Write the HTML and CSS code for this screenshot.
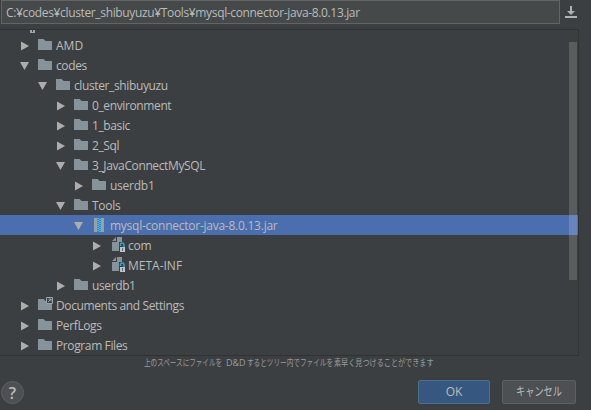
FILE: index.html
```html
<!DOCTYPE html>
<html lang="ja">
<head>
<meta charset="utf-8">
<title>Select Path</title>
<link rel="stylesheet" href="styles.css">
</head>
<body>
<svg class="defs" width="0" height="0">
  <symbol id="closed" viewBox="0 0 10 10"><path d="M1 .5 9 5 1 9.5Z" fill="#adadad"/></symbol>
  <symbol id="open" viewBox="0 0 10 10"><path d="M0 1H9L4.5 9Z" fill="#adadad"/></symbol>
  <symbol id="folder" viewBox="0 0 14 11"><path d="M0 0H5.6L7.6 2H14V11H0Z" fill="#87939a"/></symbol>
  <symbol id="link" viewBox="0 0 16 14"><path d="M0 3H5.6L7.6 5H14V14H0Z" fill="#87939a"/><path d="M8.5 1.5H14.5V7.5H8.5Z" fill="#3c3f41" stroke="#9da7ad"/><path d="M10 6 13 3M10.5 3H13V5.5" fill="none" stroke="#9da7ad"/></symbol>
  <symbol id="jar" viewBox="0 0 10 14"><path d="M0 0H3V14H0ZM7 0H10V14H7Z" fill="#93a1aa"/><path d="M3 0H7V14H3Z" fill="#4682b4"/><path d="M4 0V14M6 1V14" stroke="#40b6e0" stroke-width="2" stroke-dasharray="1 1"/></symbol>
  <symbol id="locked" viewBox="0 0 14 16"><path d="M4 0V4H0ZM5 0H10V5H7V14H0V5H5Z" fill="#87939a"/><path d="M8.5 9V7.5Q8.5 6 10.2 6T12 7.5V10" fill="none" stroke="#35a9d6" stroke-width="1.4"/><path d="M8 10H13V15H8Z" fill="#b7c5ce"/><path d="M10 11H11V14H10Z" fill="#586b76"/></symbol>
</svg>
<main class="dialog">
  <div class="top">
    <div class="path"><span>C:¥codes¥cluster_shibuyuzu¥Tools¥mysql-connector-java-8.0.13.jar</span></div>
    <svg class="download" width="12" height="12" viewBox="0 0 12 12"><path d="M5 0H7V5H10L6 9 2 5H5ZM0 10H12V12H0Z" fill="#afb1b3"/></svg>
  </div>
  <div class="tree">
    <div class="rows">
      <div class="row above"><i class="handle"></i></div>
      <div class="row l0"><svg class="arrow"><use href="#closed"/></svg><svg class="folder"><use href="#folder"/></svg><span class="caps">AMD</span></div>
      <div class="row l0"><svg class="arrow"><use href="#open"/></svg><svg class="folder"><use href="#folder"/></svg><span>codes</span></div>
      <div class="row l1"><svg class="arrow"><use href="#open"/></svg><svg class="folder"><use href="#folder"/></svg><span>cluster_shibuyuzu</span></div>
      <div class="row l2"><svg class="arrow"><use href="#closed"/></svg><svg class="folder"><use href="#folder"/></svg><span>0_environment</span></div>
      <div class="row l2"><svg class="arrow"><use href="#closed"/></svg><svg class="folder"><use href="#folder"/></svg><span>1_basic</span></div>
      <div class="row l2"><svg class="arrow"><use href="#closed"/></svg><svg class="folder"><use href="#folder"/></svg><span>2_Sql</span></div>
      <div class="row l2"><svg class="arrow"><use href="#open"/></svg><svg class="folder"><use href="#folder"/></svg><span>3_JavaConnectMySQL</span></div>
      <div class="row l3"><svg class="arrow"><use href="#closed"/></svg><svg class="folder"><use href="#folder"/></svg><span class="wide">userdb1</span></div>
      <div class="row l2"><svg class="arrow"><use href="#open"/></svg><svg class="folder"><use href="#folder"/></svg><span class="wide">Tools</span></div>
      <div class="row l3 selected"><svg class="arrow"><use href="#open"/></svg><svg class="jar"><use href="#jar"/></svg><span class="wide">mysql-connector-java-8.0.13.jar</span></div>
      <div class="row l4"><svg class="arrow"><use href="#closed"/></svg><svg class="locked"><use href="#locked"/></svg><span class="wide">com</span></div>
      <div class="row l4"><svg class="arrow"><use href="#closed"/></svg><svg class="locked"><use href="#locked"/></svg><span class="caps">META-INF</span></div>
      <div class="row l2"><svg class="arrow"><use href="#closed"/></svg><svg class="folder"><use href="#folder"/></svg><span>userdb1</span></div>
      <div class="row l0"><svg class="arrow"><use href="#closed"/></svg><svg class="link"><use href="#link"/></svg><span>Documents and Settings</span></div>
      <div class="row l0"><svg class="arrow"><use href="#closed"/></svg><svg class="folder"><use href="#folder"/></svg><span>PerfLogs</span></div>
      <div class="row l0"><svg class="arrow"><use href="#closed"/></svg><svg class="folder"><use href="#folder"/></svg><span>Program Files</span></div>
    </div>
    <div class="thumb"></div>
  </div>
  <p class="hint"><span class="part a">上のスペースにファイルを</span><span class="part b">D&amp;D</span><span class="part c">するとツリー内でファイルを</span><span class="part d">素早く見つけることができます</span></p>
  <footer class="actions">
    <button class="help">?</button>
    <button class="btn primary">OK</button>
    <button class="btn"><span class="kana">キャンセル</span></button>
  </footer>
</main>
</body>
</html>
```
FILE: styles.css
```css
* { box-sizing: border-box; }
body {
  margin: 0;
  background: #3c3f41;
  color: #bbbbbb;
  font: 12px/20px "Open Sans", "Noto Sans CJK JP", sans-serif;
}
.defs { position: absolute; }
.dialog { width: 591px; height: 410px; overflow: hidden; display: flex; flex-direction: column; }
.top { display: flex; height: 29px; align-items: flex-start; }
.path {
  width: 559px; height: 24px; margin-left: 1px; padding: 2px 0 0 4px;
  background: #45494a; border: 1px solid #646464; white-space: nowrap; letter-spacing: -0.35px;
}
.download { margin: 6px 0 0 5px; }
.tree {
  width: 579px; height: 327px; flex: none; position: relative; overflow: hidden;
  border: 1px solid #323232; border-left: 0;
}
.rows { margin-top: -15px; }
.row { height: 20px; display: flex; align-items: center; white-space: nowrap; letter-spacing: -0.38px; }
.row span { padding-top: 2px; }
.row .caps { letter-spacing: 0; }
.row .wide { letter-spacing: -0.25px; }
.l0 { padding-left: 20px; }
.l1 { padding-left: 38px; }
.l2 { padding-left: 56px; }
.l3 { padding-left: 74px; }
.l4 { padding-left: 92px; }
.selected { background: #4b6eaf; }
.arrow { width: 10px; height: 10px; margin: 1px 8px 0 0; }
.folder { width: 14px; height: 11px; margin: 0 4px 1px 0; }
.link { width: 16px; height: 14px; margin: -4px 2px 0 0; }
.jar { width: 10px; height: 14px; margin: 0 6px 0 2px; }
.locked { width: 14px; height: 16px; margin: 0 2px; }
.above { padding-left: 30px; align-items: flex-end; }
.handle { width: 5px; height: 3px; margin-bottom: 2px; border: solid #9aa7b0; border-width: 0 2px 1px; }
.thumb { position: absolute; top: 12px; right: 1px; width: 8px; height: 238px; background: rgba(255, 255, 255, 0.155); }
.hint {
  margin: 0; padding-left: 144px; height: 22px; line-height: 14px; display: flex;
  font-size: 9px; color: #9b9b9b; white-space: nowrap;
}
.part { flex: none; transform-origin: 0 50%; }
.a { width: 82px; transform: scaleX(0.73); }
.b { width: 21px; }
.c { width: 87px; transform: scaleX(0.735); }
.d { width: 101px; transform: scaleX(0.79); }
.actions { display: flex; height: 32px; align-items: flex-start; padding-top: 2px; }
button { font: inherit; color: #bbbbbb; padding: 0; }
.help {
  width: 23px; height: 23px; margin: 1px 394px 0 1px; border-radius: 50%;
  border: 1px solid #5e6060; background: #4c5052; font-size: 16px; font-weight: 600; line-height: 20px;
}
.btn {
  width: 74px; height: 24px; margin-right: 12px; border-radius: 2px;
  border: 1px solid #5e6060; background: #4c5052; line-height: 22px;
}
.primary { width: 72px; background: #365880; border-color: #4c708c; }
.kana { display: inline-block; transform: scaleX(0.77); }
```
